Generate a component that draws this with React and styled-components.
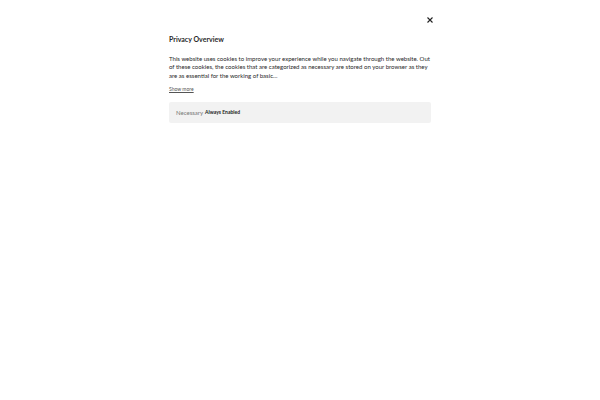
import React from "react";
import styled, { createGlobalStyle } from "styled-components";

const Global = createGlobalStyle`
  html, body { margin: 0; padding: 0; background: #fff; }
  body { font-family: Lato, "Open Sans", sans-serif; color: #212121; }
`;

const Modal = styled.div`
  width: 262px;
  margin: 0 auto;
  padding-top: 16px;
  display: flex;
  flex-direction: column;
`;

const CloseRow = styled.div`
  display: flex;
  justify-content: flex-end;
  height: 9px;
`;

const CloseBtn = styled.button`
  border: 0;
  background: none;
  padding: 0;
  width: 8px;
  height: 8px;
  display: flex;
  align-items: center;
  justify-content: center;
  margin-right: -3px;
  cursor: pointer;
`;

const Title = styled.h2`
  margin: 9px 0 0;
  font-size: 7px;
  font-weight: 700;
  color: #2a2a2a;
  line-height: 10px;
`;

const Body = styled.p`
  margin: 11px 0 0;
  font-size: 6.05px;
  line-height: 8.3px;
  color: #2a2a2a;
`;

const ShowMore = styled.a`
  margin-top: 5px;
  font-size: 5px;
  line-height: 8px;
  color: #555;
  text-decoration: underline;
  align-self: flex-start;
`;

const Item = styled.div`
  margin-top: 9px;
  background: #f2f2f2;
  border-radius: 2px;
  height: 21px;
  display: flex;
  align-items: center;
  padding: 0 7px;
  gap: 2px;
`;

const ItemName = styled.span`
  font-size: 6px;
  color: #777;
`;

const Badge = styled.span`
  font-size: 5px;
  font-weight: 700;
  color: #212121;
`;

export default function App() {
  return (
    <>
      <Global />
      <Modal>
        <CloseRow>
          <CloseBtn aria-label="Close">
            <svg width="6" height="6" viewBox="0 0 6 6">
              <path d="M0.5 0.5L5.5 5.5M5.5 0.5L0.5 5.5" stroke="#222" strokeWidth="1.1" />
            </svg>
          </CloseBtn>
        </CloseRow>
        <Title>Privacy Overview</Title>
        <Body>
          This website uses cookies to improve your experience while you navigate through the website. Out of these cookies, the cookies that are categorized as necessary are stored on your browser as they are as essential for the working of basic...
        </Body>
        <ShowMore>Show more</ShowMore>
        <Item>
          <ItemName>Necessary</ItemName>
          <Badge>Always Enabled</Badge>
        </Item>
      </Modal>
    </>
  );
}
